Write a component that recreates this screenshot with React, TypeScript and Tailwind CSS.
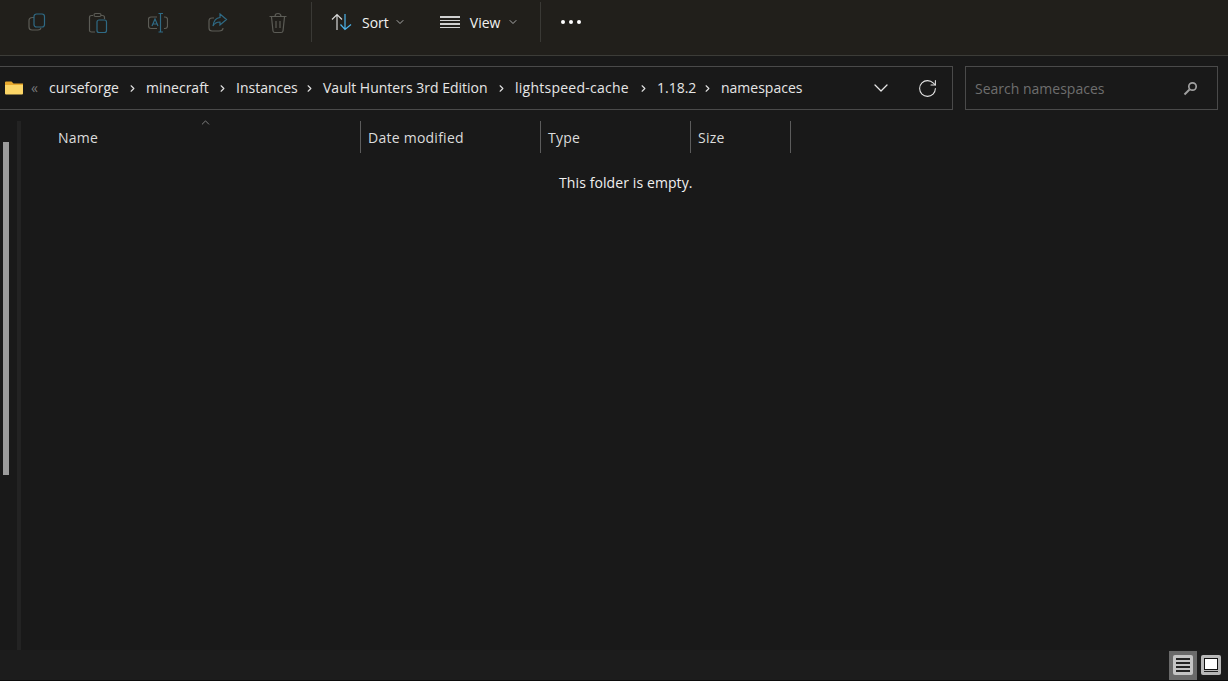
import { ChevronDown, ChevronRight, ChevronUp, RotateCw } from "lucide-react";

const FONT = "font-['Open_Sans','Noto_Sans',sans-serif]";

// widths per crumb, Open Sans runs a bit narrower than the real thing on some
const crumbs = [
  { label: "curseforge", cls: "w-[70px]" },
  { label: "minecraft", cls: "w-[63px]" },
  { label: "Instances", cls: "w-[60px]" },
  { label: "Vault Hunters 3rd Edition", cls: "w-[165px]" },
  { label: "lightspeed-cache", cls: "w-[115px] tracking-[0.25px]" },
  { label: "1.18.2", cls: "w-[37px]" },
  { label: "namespaces", cls: "w-[81px]" },
];

const GREY = "#5c5c56";
const BLUE = "#2f6a85";

function ToolIcon({ children }: { children: React.ReactNode }) {
  return (
    <svg width="20" height="22" viewBox="0 0 20 22" fill="none" strokeWidth="1.2" className="shrink-0">
      {children}
    </svg>
  );
}

function Toolbar() {
  return (
    <div className="flex h-[56px] shrink-0 items-start border-b border-[#3c3c38] bg-[#211f1b] pt-[2px]">
      <div className="flex w-[311px] shrink-0 items-center gap-[40px] pl-[28px] pt-[10px]">
        <ToolIcon>
          <path d="M6 5.5 H4.5 Q1 5.5 1 8.5 V15 Q1 18 4 18 H10 Q12.5 18 13 16" stroke={GREY} />
          <rect x="6" y="2" width="10.5" height="13" rx="2.5" stroke={BLUE} />
        </ToolIcon>
        <ToolIcon>
          <path d="M5 3.5 H3.5 Q1.5 3.5 1.5 5.5 V18.5 Q1.5 20 3.5 20 H7" stroke={GREY} />
          <path d="M13 3.5 H14.5 Q16.5 3.5 16.5 5.5 V7" stroke={GREY} />
          <rect x="6" y="1.5" width="7" height="3" rx="1.5" stroke={GREY} />
          <rect x="9" y="8" width="9.5" height="12.5" rx="2" stroke={BLUE} />
        </ToolIcon>
        <ToolIcon>
          <path d="M9 5 H3 Q0.5 5 0.5 7.5 V14 Q0.5 16.5 3 16.5 H9" stroke={GREY} />
          <path d="M16 5 H17 Q19.5 5 19.5 7.5 V14 Q19.5 16.5 17 16.5 H16" stroke={GREY} />
          <path d="M4 14 L7 7 L10 14 M5 12 H9" stroke={BLUE} />
          <path d="M12.5 1.5 V20 M10.5 1.5 H15 M10.5 20 H15" stroke={BLUE} />
        </ToolIcon>
        <ToolIcon>
          <path d="M6 6 H4 Q1 6 1 9 V16 Q1 19 4 19 H11 Q15 19 15 16" stroke={GREY} />
          <path d="M12 2 L18.5 7.5 L12 13 V10 Q7 10 5 14 Q6 6 12 5.5 Z" stroke={BLUE} />
        </ToolIcon>
        <ToolIcon>
          <path d="M1.5 4.5 H18.5 M7 4.5 Q7 1.5 10 1.5 Q13 1.5 13 4.5" stroke={GREY} />
          <path d="M3.5 5 L5 19 Q5.2 20.5 7 20.5 H13 Q14.8 20.5 15 19 L16.5 5" stroke={GREY} />
          <path d="M8 9 V16 M12 9 V16" stroke={GREY} />
        </ToolIcon>
      </div>
      <div className="flex h-[40px] w-[229px] shrink-0 items-center border-l border-[#3a3935] pl-[19px]">
        <svg width="21" height="18" viewBox="0 0 21 18" fill="none" strokeWidth="1.2" className="mr-[10px] shrink-0">
          <path d="M6 17 V1.5 M1 6.5 L6 1.5 L11 6.5" stroke="#d8d8d8" />
          <path d="M14 1 V16.5 M9.5 11.5 L14 16.5 L20 11.5" stroke="#4cb4ec" />
        </svg>
        <span className="text-[14px] text-[#f2f2f2]">Sort</span>
        <ChevronDown strokeWidth={1.8} className="ml-[5px] mr-[34px] h-[12px] w-[12px] text-[#b8b8b8]" />
        <div className="mr-[10px] flex w-[20px] shrink-0 flex-col gap-[2px]">
          <div className="h-[1.5px] bg-[#d0d0d0]" />
          <div className="h-[1.5px] bg-[#d0d0d0]" />
          <div className="h-[1.5px] bg-[#d0d0d0]" />
          <div className="h-[1.5px] bg-[#d0d0d0]" />
        </div>
        <span className="text-[14px] text-[#f2f2f2]">View</span>
        <ChevronDown strokeWidth={1.8} className="ml-[7px] h-[12px] w-[12px] text-[#b8b8b8]" />
      </div>
      <div className="flex h-[40px] items-center gap-[4px] border-l border-[#3a3935] pl-[20px]">
        <div className="h-[4px] w-[4px] rounded-full bg-white" />
        <div className="h-[4px] w-[4px] rounded-full bg-white" />
        <div className="h-[4px] w-[4px] rounded-full bg-white" />
      </div>
    </div>
  );
}

function AddressRow() {
  return (
    <div className="flex shrink-0 gap-[12px] pr-[10px] pt-[10px]">
      <div className="flex h-[44px] flex-1 items-center border-y border-r border-[#4a4a4a] pl-[5px]">
        <svg width="18" height="14" viewBox="0 0 18 14" className="mr-[8px] shrink-0">
          <path d="M0 1.5 Q0 0.5 1 0.5 H6.5 L8.5 2.5 H18 V5 H0 Z" fill="#e8a92e" />
          <path d="M0 4 H18 V12.5 Q18 13.5 17 13.5 H1 Q0 13.5 0 12.5 Z" fill="#fcd667" />
        </svg>
        <span className="mr-[9px] w-[9px] text-[14px] leading-none text-[#77777a]">«</span>
        {crumbs.map((c, i) => (
          <div key={c.label} className="flex items-center">
            <span className={`whitespace-nowrap pb-[2px] text-[14px] text-[#e6e6e6] ${c.cls}`}>{c.label}</span>
            {i < crumbs.length - 1 && (
              <ChevronRight strokeWidth={2.5} className="mx-[8px] h-[11px] w-[11px] text-[#e0e0e0]" />
            )}
          </div>
        ))}
        <div className="ml-auto flex items-center gap-[24px] pr-[14px]">
          <ChevronDown strokeWidth={1.3} className="h-[24px] w-[24px] text-[#e6e6e6]" />
          <RotateCw strokeWidth={1.2} className="h-[21px] w-[21px] text-[#e6e6e6]" />
        </div>
      </div>
      <div className="flex h-[44px] w-[253px] shrink-0 items-center justify-between border border-[#4a4a4a] pl-[9px] pr-[19px]">
        <span className="text-[14px] text-[#6e6e6e]">Search namespaces</span>
        <svg width="15" height="15" viewBox="0 0 15 15" fill="none">
          <circle cx="9.5" cy="5.5" r="3.7" stroke="#a0a0a0" strokeWidth="1.7" />
          <path d="M6.5 8.5 L1.5 13.5" stroke="#a0a0a0" strokeWidth="2" />
        </svg>
      </div>
    </div>
  );
}

function Column({ label, width, sorted }: { label: string; width: string; sorted?: boolean }) {
  return (
    <div className={`relative flex h-[32px] shrink-0 items-center border-r border-[#5c5c5c] pl-[7px] ${width}`}>
      {sorted && <ChevronUp strokeWidth={1.3} className="absolute left-[148px] top-[-5px] h-[13px] w-[13px] text-[#a8a8a8]" />}
      <span className="text-[14px] tracking-[0.25px] text-[#dcdcdc]">{label}</span>
    </div>
  );
}

function Content() {
  return (
    <div className="flex min-h-0 flex-1 bg-[#191919]">
      <div className="w-[17px] shrink-0 pl-[3px] pt-[21px]">
        <div className="h-[333px] w-[6px] bg-[#9b9b9b]" />
      </div>
      <div className="w-[4px] shrink-0 bg-[#232323]" />
      <div className="min-w-0 flex-1">
        <div className="flex pl-[30px]">
          <Column label="Name" width="w-[310px]" sorted />
          <Column label="Date modified" width="w-[180px]" />
          <Column label="Type" width="w-[150px]" />
          <Column label="Size" width="w-[100px]" />
        </div>
        <p className="mt-[20px] pl-[538px] text-[14px] leading-[19px] tracking-[0.1px] text-[#f0f0f0]">This folder is empty.</p>
      </div>
    </div>
  );
}

function StatusBar() {
  return (
    <div className="flex h-[31px] shrink-0 items-center justify-end gap-[4px] border-b border-[#0c0c0c] bg-[#1c1c1c] pr-[7px]">
      <div className="flex h-[29px] w-[28px] items-center justify-center bg-[#6a6a6a]">
        <div className="flex h-[20px] w-[20px] flex-col justify-center gap-[2px] rounded-[2px] bg-[#c4c4c4] px-[3px]">
          <div className="h-[2px] bg-[#222]" />
          <div className="h-[2px] bg-[#222]" />
          <div className="h-[2px] bg-[#222]" />
          <div className="h-[2px] bg-[#222]" />
        </div>
      </div>
      <div className="flex h-[20px] w-[20px] flex-col gap-[1px] rounded-[2px] bg-[#b8b8b8] p-[3px]">
        <div className="flex-1 border border-[#111] bg-white" />
        <div className="h-[1px] bg-[#222]" />
      </div>
    </div>
  );
}

export default function App() {
  return (
    <div className={`flex h-[681px] w-[1228px] flex-col overflow-hidden bg-[#191919] ${FONT}`}>
      <Toolbar />
      <AddressRow />
      <div className="h-[11px] shrink-0" />
      <Content />
      <StatusBar />
    </div>
  );
}
